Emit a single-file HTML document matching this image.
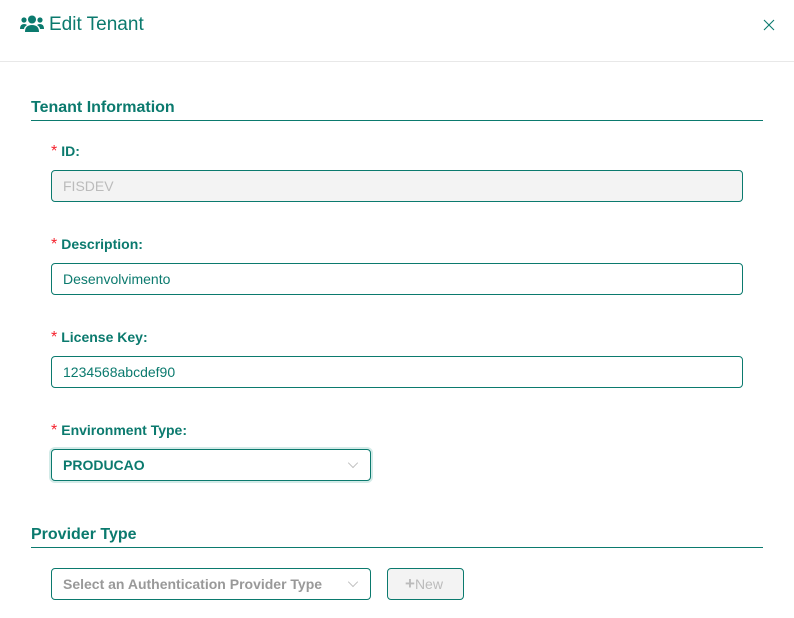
<!DOCTYPE html>
<html><head><style>
*{box-sizing:border-box;margin:0;padding:0}
body{width:794px;height:618px;background:#fff;font-family:"Liberation Sans",sans-serif;position:relative;overflow:hidden;color:#0b7a6e}
.a{position:absolute}
.hdr{left:0;top:0;width:794px;height:62px;border-bottom:1px solid #e8e8e8}
.title{left:49px;top:14px;font-size:19px;color:#0b7a6e}
.sec{left:31px;width:732px;font-size:16px;font-weight:bold;border-bottom:1px solid #0b7a6e;padding-bottom:3px}
.lbl{left:51px;font-size:14px;font-weight:bold}
.lbl span{color:#f5222d;font-weight:normal;font-size:16px;margin-right:4px}
.inp{left:51px;height:32px;border:1px solid #0b7a6e;border-radius:4px;font-size:14px;padding:7px 11px;color:#0b7a6e;background:#fff}
.chev{position:absolute;right:13px;top:9px;width:8px;height:8px;border-right:1px solid #bbb;border-bottom:1px solid #bbb;transform:rotate(45deg) scale(.9)}
</style></head><body>
<div class="a hdr"></div>
<svg class="a" style="left:20px;top:15px" width="24" height="18" viewBox="0 0 24 18"><circle cx="12" cy="4.5" r="4" fill="#0b7a6e"/><circle cx="4" cy="5" r="2.6" fill="#0b7a6e"/><circle cx="20" cy="5" r="2.6" fill="#0b7a6e"/><path d="M5 17 Q5 10 12 10 Q19 10 19 17Z" fill="#0b7a6e"/><path d="M0 14 Q0 9 4 9 Q6 9 7 10 Q4 12 4 14Z" fill="#0b7a6e"/><path d="M24 14 Q24 9 20 9 Q18 9 17 10 Q20 12 20 14Z" fill="#0b7a6e"/></svg>
<div class="a title">Edit Tenant</div>
<svg class="a" style="left:763px;top:19px" width="12" height="12" viewBox="0 0 12 12"><path d="M1 1L11 11M11 1L1 11" stroke="#0b7a6e" stroke-width="1.1"/></svg>
<div class="a sec" style="top:99px">Tenant Information</div>
<div class="a lbl" style="top:143px"><span>*</span>ID:</div>
<div class="a inp" style="top:170px;width:692px;background:#f3f3f3;color:#bbb">FISDEV</div>
<div class="a lbl" style="top:236px"><span>*</span>Description:</div>
<div class="a inp" style="top:263px;width:692px">Desenvolvimento</div>
<div class="a lbl" style="top:329px"><span>*</span>License Key:</div>
<div class="a inp" style="top:356px;width:692px">1234568abcdef90</div>
<div class="a lbl" style="top:422px"><span>*</span>Environment Type:</div>
<div class="a inp" style="top:449px;width:320px;font-weight:bold;box-shadow:0 0 0 2px #d3ebe8">PRODUCAO<div class="chev"></div></div>
<div class="a sec" style="top:526px">Provider Type</div>
<div class="a inp" style="top:568px;width:320px;font-weight:bold;color:#999">Select an Authentication Provider Type<div class="chev"></div></div>
<div class="a inp" style="left:387px;top:568px;width:77px;background:#f3f3f3;color:#bbb;padding:7px 0 0 17px"><b style="font-size:17px;line-height:14px">+</b>New</div>
</body></html>
